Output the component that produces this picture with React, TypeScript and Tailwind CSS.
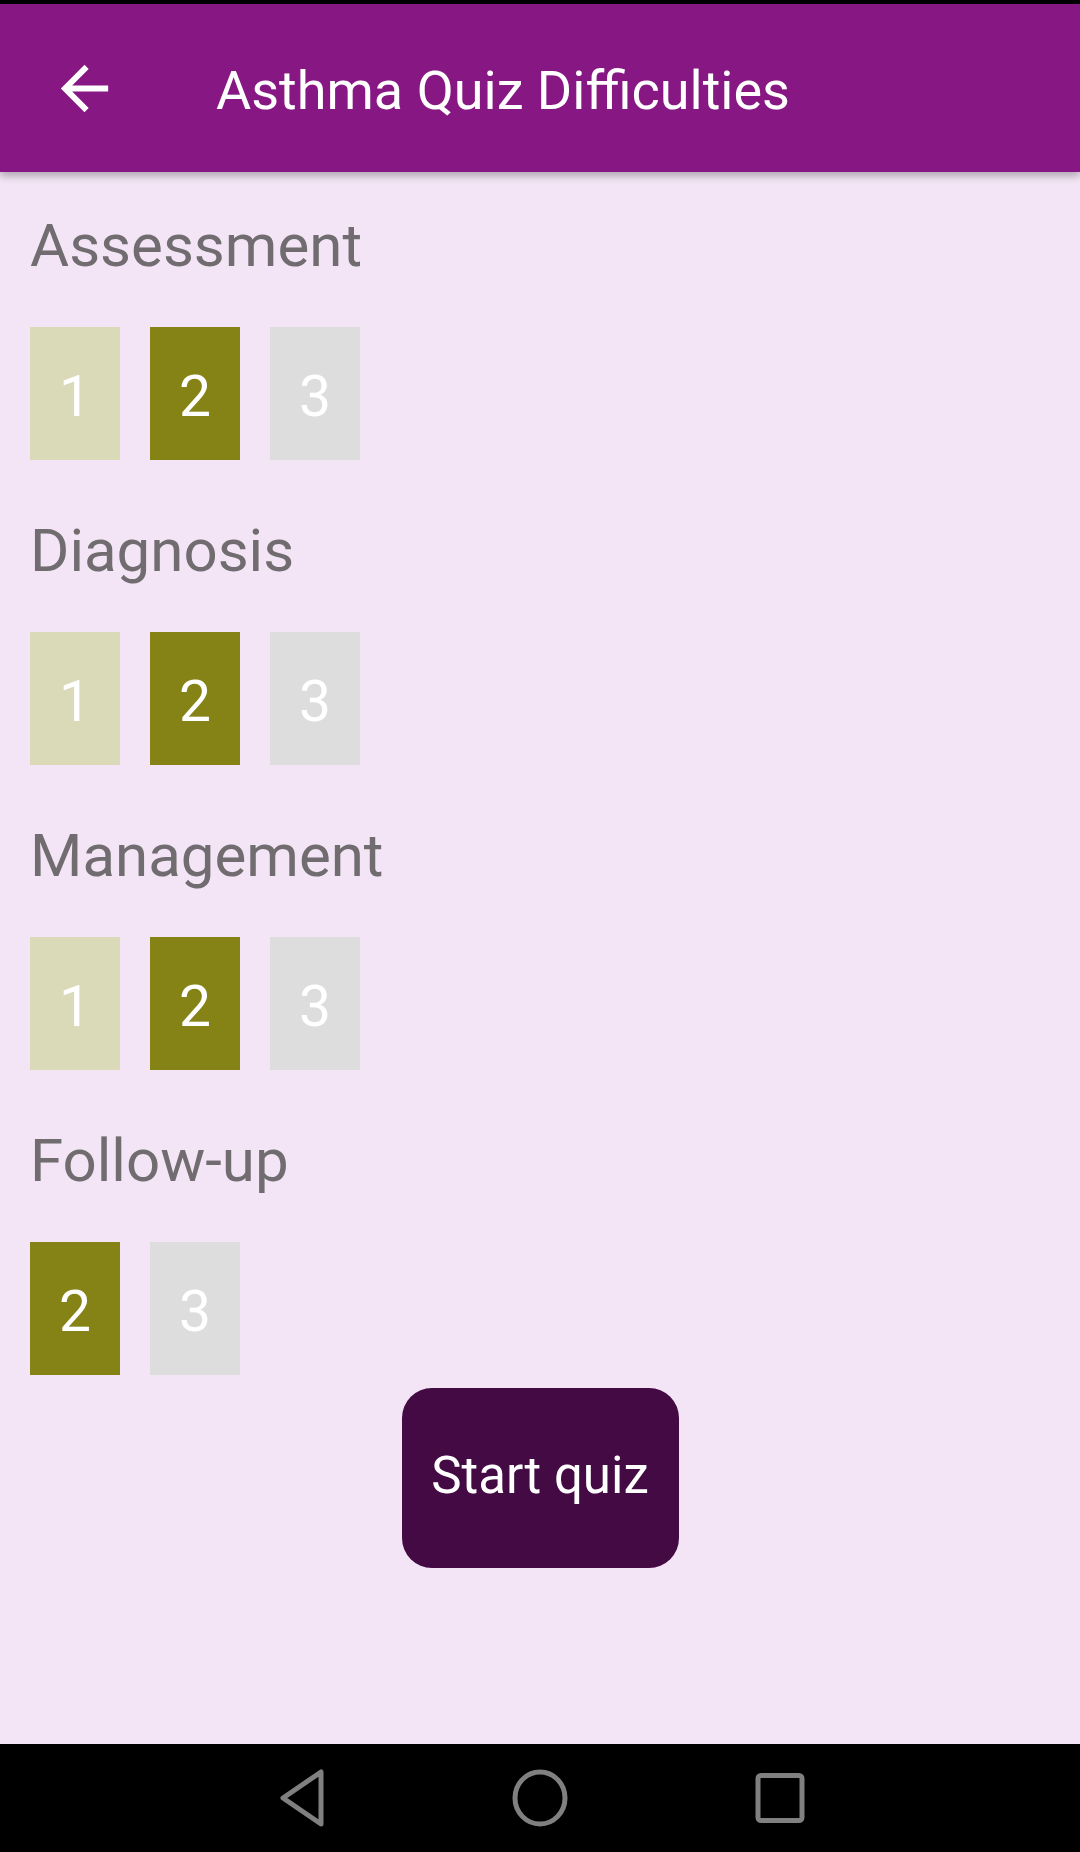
import React from "react";

type Level = "done" | "current" | "locked";

interface Section {
  title: string;
  levels: { n: number; state: Level }[];
}

const sections: Section[] = [
  {
    title: "Assessment",
    levels: [
      { n: 1, state: "done" },
      { n: 2, state: "current" },
      { n: 3, state: "locked" },
    ],
  },
  {
    title: "Diagnosis",
    levels: [
      { n: 1, state: "done" },
      { n: 2, state: "current" },
      { n: 3, state: "locked" },
    ],
  },
  {
    title: "Management",
    levels: [
      { n: 1, state: "done" },
      { n: 2, state: "current" },
      { n: 3, state: "locked" },
    ],
  },
  {
    title: "Follow-up",
    levels: [
      { n: 2, state: "current" },
      { n: 3, state: "locked" },
    ],
  },
];

const boxColor: Record<Level, string> = {
  done: "bg-[#dadab9]",
  current: "bg-[#868316]",
  locked: "bg-[#dddddd]",
};

const App: React.FC = () => {
  return (
    <div className="w-[1080px] h-[1852px] flex flex-col bg-[#f3e5f5] font-['Roboto',sans-serif] overflow-hidden">
      <div className="h-[4px] bg-black" />

      {/* app bar */}
      <header className="relative z-10 h-[168px] bg-[#861783] flex items-center shadow-[0_4px_8px_rgba(0,0,0,0.28)]">
        <svg
          viewBox="0 0 24 24"
          className="ml-[49px] w-[71px] h-[71px] fill-white shrink-0"
        >
          <path d="M20 11H7.83l5.59-5.59L12 4l-8 8 8 8 1.41-1.41L7.83 13H20v-2z" />
        </svg>
        <h1 className="ml-[96px] pt-[4px] text-[54px] text-white font-normal">
          Asthma Quiz Difficulties
        </h1>
      </header>

      <main className="flex-1 px-[30px] pt-[39px]">
        {sections.map((s, i) => (
          <div key={s.title} className={i > 0 ? "mt-[56px]" : ""}>
            <div className="h-[70px] leading-[70px] text-[60px] text-[#706c70]">
              {s.title}
            </div>
            <div className="mt-[46px] flex gap-[30px]">
              {s.levels.map((l) => (
                <div
                  key={l.n}
                  className={`w-[90px] h-[133px] pt-[6px] flex items-center justify-center text-[57px] text-white ${boxColor[l.state]}`}
                >
                  {l.n}
                </div>
              ))}
            </div>
          </div>
        ))}

        <button className="mt-[13px] mx-auto w-[277px] h-[180px] pb-[4px] rounded-[30px] bg-[#430a43] text-white text-[51px] flex items-center justify-center">
          Start quiz
        </button>
      </main>

      {/* system nav bar */}
      <nav className="h-[108px] bg-black flex justify-center items-center">
        <div className="w-[240px] flex justify-center">
          <svg width="56" height="60" viewBox="0 0 56 60">
            <path
              d="M49 4 L49 56 L11 30 Z"
              fill="none"
              stroke="#808080"
              strokeWidth="5"
              strokeLinejoin="round"
            />
          </svg>
        </div>
        <div className="w-[240px] flex justify-center">
          <svg width="60" height="60" viewBox="0 0 60 60">
            <ellipse
              cx="30"
              cy="30"
              rx="25"
              ry="26"
              fill="none"
              stroke="#808080"
              strokeWidth="5"
            />
          </svg>
        </div>
        <div className="w-[240px] flex justify-center">
          <svg width="56" height="56" viewBox="0 0 56 56">
            <rect
              x="6"
              y="5.5"
              width="44"
              height="45"
              rx="3"
              fill="none"
              stroke="#808080"
              strokeWidth="5"
            />
          </svg>
        </div>
      </nav>
    </div>
  );
};

export default App;
